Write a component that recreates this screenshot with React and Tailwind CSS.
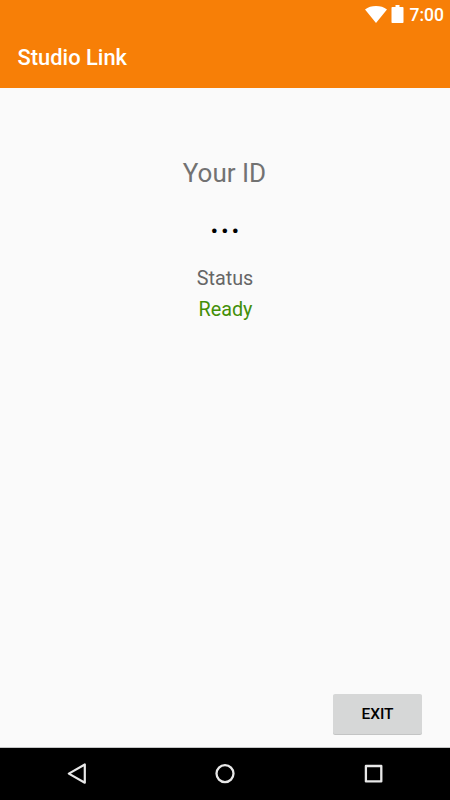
const StatusBar = () => (
  <div className="flex h-7 items-center justify-end pr-[6px] text-white">
    <svg className="mr-1 h-[17px] w-[22px]" viewBox="0 0 22 17" fill="currentColor">
      <path d="M11 17 0 3.4C3 1.1 6.8 0 11 0s8 1.1 11 3.4z" />
    </svg>
    <svg className="mr-[6px] h-[18px] w-[13px]" viewBox="0 0 13 18" fill="currentColor">
      <path d="M4.5 0h4v2h3.2a.8.8 0 0 1 .8.8v14.4a.8.8 0 0 1-.8.8H1.3a.8.8 0 0 1-.8-.8V2.8a.8.8 0 0 1 .8-.8h3.2z" />
    </svg>
    <span className="pt-px text-[17.5px] leading-7 font-medium">7:00</span>
  </div>
);

const NavBar = () => (
  <nav className="flex h-[53px] items-center justify-between border-t border-[#c4c5c6] bg-black px-[63px] text-[#e8e8e8]">
    <button className="flex h-full w-7 items-center justify-center">
      <svg className="h-6 w-6" viewBox="0 0 24 24" fill="none" stroke="currentColor" strokeWidth="2.2" strokeLinejoin="round">
        <path d="M3.8 11.6 19.8 2.5v18.2z" />
      </svg>
    </button>
    <button className="flex h-full w-7 items-center justify-center">
      <svg className="h-6 w-6" viewBox="0 0 24 24" fill="none" stroke="currentColor" strokeWidth="2.3">
        <circle cx="12" cy="11.6" r="8.5" />
      </svg>
    </button>
    <button className="flex h-full w-7 items-center justify-center">
      <svg className="h-6 w-6" viewBox="0 0 24 24" fill="none" stroke="currentColor" strokeWidth="2.3" strokeLinejoin="round">
        <rect x="4.9" y="4" width="15.4" height="15.4" />
      </svg>
    </button>
  </nav>
);

const App = () => {
  return (
    <div className="flex h-[800px] w-[450px] flex-col bg-[#fafafa] font-['Roboto',sans-serif]">
      <header className="h-[88px] bg-[#f77f07]">
        <StatusBar />
        <h1 className="pl-[17.5px] text-[21.9px] leading-[60px] font-medium text-white">Studio Link</h1>
      </header>

      <main className="flex flex-1 flex-col items-center">
        <p className="mt-[67px] pr-px text-[26px] leading-9 text-[#727272]">Your ID</p>
        <p className="mt-[11px] text-[40px] leading-9 text-black">...</p>
        <p className="mt-[25px] text-[19.8px] leading-[31px] text-[#666]">Status</p>
        <p className="pl-px text-[19.8px] leading-[31px] text-[#438f08]">Ready</p>
        <button className="mt-auto mr-7 mb-[13px] h-10 w-[89px] self-end rounded-[2px] bg-[#d6d7d7] pt-px text-[15.5px] font-medium text-black shadow-[0_1px_0_#c3c4c4]">
          EXIT
        </button>
      </main>

      <NavBar />
    </div>
  );
};

export default App;
